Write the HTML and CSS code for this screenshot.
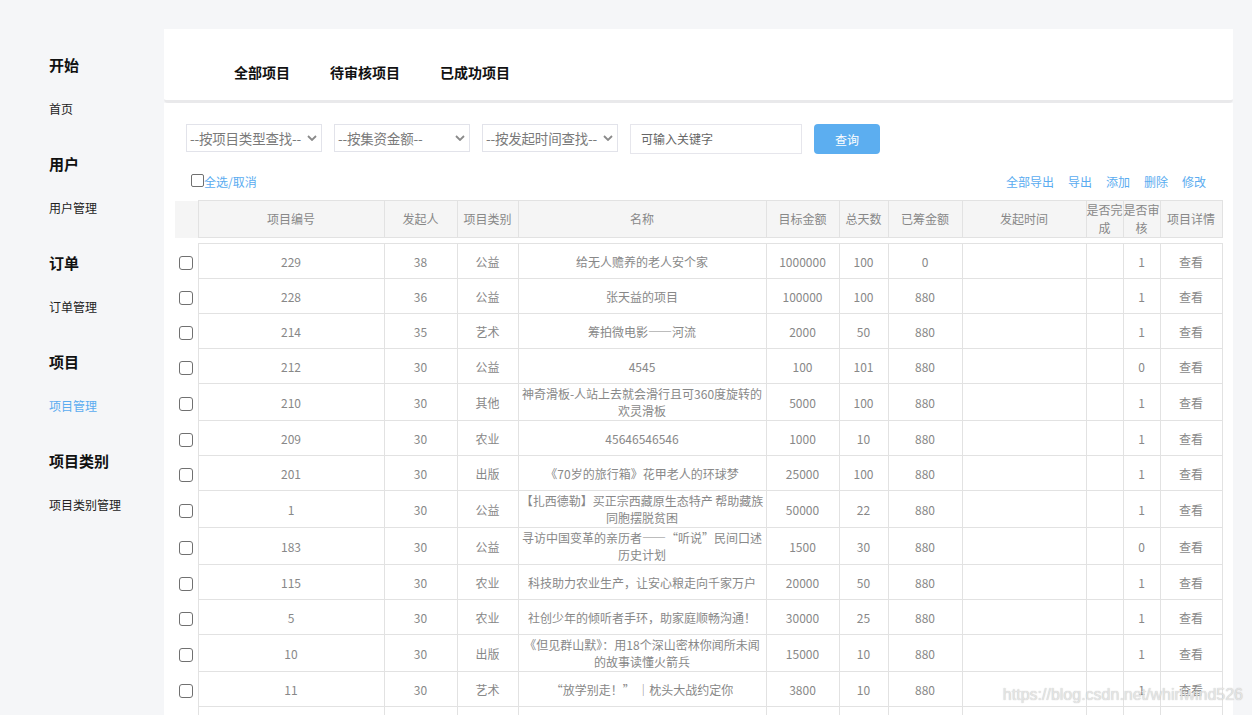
FILE: index.html
```html
<!DOCTYPE html>
<html lang="zh-CN">
<head>
<meta charset="utf-8">
<title>项目管理</title>
<link rel="stylesheet" href="styles.css">
</head>
<body>
<div class="page">
  <aside class="sidebar">
    <div class="nav-group"><div class="nav-title">开始</div><a class="nav-link" href="#">首页</a></div>
    <div class="nav-group"><div class="nav-title">用户</div><a class="nav-link" href="#">用户管理</a></div>
    <div class="nav-group"><div class="nav-title">订单</div><a class="nav-link" href="#">订单管理</a></div>
    <div class="nav-group"><div class="nav-title">项目</div><a class="nav-link active" href="#">项目管理</a></div>
    <div class="nav-group"><div class="nav-title">项目类别</div><a class="nav-link" href="#">项目类别管理</a></div>
  </aside>
  <main class="main">
    <div class="tabs-panel">
      <nav class="tabs">
        <a class="tab" href="#">全部项目</a>
        <a class="tab" href="#">待审核项目</a>
        <a class="tab" href="#">已成功项目</a>
      </nav>
    </div>
    <section class="content">
      <div class="filters">
        <div class="select"><span>--按项目类型查找--</span><svg class="chev" width="10" height="6" viewBox="0 0 10 6"><path d="M1 1 L5 5 L9 1" fill="none" stroke="#8a8a8a" stroke-width="1.8"/></svg></div>
        <div class="select"><span>--按集资金额--</span><svg class="chev" width="10" height="6" viewBox="0 0 10 6"><path d="M1 1 L5 5 L9 1" fill="none" stroke="#8a8a8a" stroke-width="1.8"/></svg></div>
        <div class="select"><span>--按发起时间查找--</span><svg class="chev" width="10" height="6" viewBox="0 0 10 6"><path d="M1 1 L5 5 L9 1" fill="none" stroke="#8a8a8a" stroke-width="1.8"/></svg></div>
        <div class="search">可输入关键字</div>
        <button class="btn-query" type="button">查询</button>
      </div>
      <div class="toolbar">
        <label class="check-all"><span class="checkbox"></span><span class="link">全选/取消</span></label>
        <div class="actions">
          <a class="link" href="#">全部导出</a>
          <a class="link" href="#">导出</a>
          <a class="link" href="#">添加</a>
          <a class="link" href="#">删除</a>
          <a class="link" href="#">修改</a>
        </div>
      </div>
      <table class="grid grid-head">
        <colgroup>
          <col class="c-chk"><col class="c-id"><col class="c-user"><col class="c-type"><col class="c-name"><col class="c-goal"><col class="c-days"><col class="c-raised"><col class="c-time"><col class="c-done"><col class="c-audit"><col class="c-detail">
        </colgroup>
        <thead>
          <tr>
            <th class="chk"></th>
            <th>项目编号</th><th>发起人</th><th>项目类别</th><th>名称</th><th>目标金额</th><th>总天数</th><th>已筹金额</th><th>发起时间</th><th>是否完成</th><th>是否审核</th><th>项目详情</th>
          </tr>
        </thead>
      </table>
      <table class="grid grid-body">
        <colgroup>
          <col class="c-chk"><col class="c-id"><col class="c-user"><col class="c-type"><col class="c-name"><col class="c-goal"><col class="c-days"><col class="c-raised"><col class="c-time"><col class="c-done"><col class="c-audit"><col class="c-detail">
        </colgroup>
        <tbody>
          <tr><td class="chk"><span class="checkbox"></span></td><td>229</td><td>38</td><td>公益</td><td>给无人赡养的老人安个家</td><td>1000000</td><td>100</td><td>0</td><td></td><td></td><td>1</td><td>查看</td></tr>
          <tr><td class="chk"><span class="checkbox"></span></td><td>228</td><td>36</td><td>公益</td><td>张天益的项目</td><td>100000</td><td>100</td><td>880</td><td></td><td></td><td>1</td><td>查看</td></tr>
          <tr><td class="chk"><span class="checkbox"></span></td><td>214</td><td>35</td><td>艺术</td><td>筹拍微电影——河流</td><td>2000</td><td>50</td><td>880</td><td></td><td></td><td>1</td><td>查看</td></tr>
          <tr><td class="chk"><span class="checkbox"></span></td><td>212</td><td>30</td><td>公益</td><td>4545</td><td>100</td><td>101</td><td>880</td><td></td><td></td><td>0</td><td>查看</td></tr>
          <tr><td class="chk"><span class="checkbox"></span></td><td>210</td><td>30</td><td>其他</td><td>神奇滑板-人站上去就会滑行且可360度旋转的欢灵滑板</td><td>5000</td><td>100</td><td>880</td><td></td><td></td><td>1</td><td>查看</td></tr>
          <tr><td class="chk"><span class="checkbox"></span></td><td>209</td><td>30</td><td>农业</td><td>45646546546</td><td>1000</td><td>10</td><td>880</td><td></td><td></td><td>1</td><td>查看</td></tr>
          <tr><td class="chk"><span class="checkbox"></span></td><td>201</td><td>30</td><td>出版</td><td>《70岁的旅行箱》花甲老人的环球梦</td><td>25000</td><td>100</td><td>880</td><td></td><td></td><td>1</td><td>查看</td></tr>
          <tr><td class="chk"><span class="checkbox"></span></td><td>1</td><td>30</td><td>公益</td><td>【扎西德勒】买正宗西藏原生态特产 帮助藏族同胞摆脱贫困</td><td>50000</td><td>22</td><td>880</td><td></td><td></td><td>1</td><td>查看</td></tr>
          <tr><td class="chk"><span class="checkbox"></span></td><td>183</td><td>30</td><td>公益</td><td>寻访中国变革的亲历者——“听说”民间口述历史计划</td><td>1500</td><td>30</td><td>880</td><td></td><td></td><td>0</td><td>查看</td></tr>
          <tr><td class="chk"><span class="checkbox"></span></td><td>115</td><td>30</td><td>农业</td><td>科技助力农业生产，让安心粮走向千家万户</td><td>20000</td><td>50</td><td>880</td><td></td><td></td><td>1</td><td>查看</td></tr>
          <tr><td class="chk"><span class="checkbox"></span></td><td>5</td><td>30</td><td>农业</td><td>社创少年的倾听者手环，助家庭顺畅沟通！</td><td>30000</td><td>25</td><td>880</td><td></td><td></td><td>1</td><td>查看</td></tr>
          <tr><td class="chk"><span class="checkbox"></span></td><td>10</td><td>30</td><td>出版</td><td>《但见群山默》：用18个深山密林你闻所未闻的故事读懂火箭兵</td><td>15000</td><td>10</td><td>880</td><td></td><td></td><td>1</td><td>查看</td></tr>
          <tr><td class="chk"><span class="checkbox"></span></td><td>11</td><td>30</td><td>艺术</td><td>“放学别走！” ｜枕头大战约定你</td><td>3800</td><td>10</td><td>880</td><td></td><td></td><td>1</td><td>查看</td></tr>
          <tr class="cut"><td class="chk"></td><td></td><td></td><td></td><td></td><td></td><td></td><td></td><td></td><td></td><td></td><td></td></tr>
        </tbody>
      </table>
    </section>
  </main>
  <div class="watermark">https://blog.csdn.net/whirlwind526</div>
</div>
</body>
</html>
```

FILE: styles.css
```css
html, body {
  margin: 0;
  height: 100%;
  overflow: hidden;
  background: #f5f6f8;
  font-family: "Noto Sans CJK SC", "Noto Sans", sans-serif;
}

.page {
  display: flex;
  height: 100vh;
  overflow: hidden;
  position: relative;
}

/* Sidebar */
.sidebar {
  width: 164px;
  flex: none;
  box-sizing: border-box;
  padding: 55px 0 0 49px;
}
.nav-title {
  font-size: 15px;
  font-weight: bold;
  line-height: 20px;
  color: #111;
}
.nav-link {
  display: block;
  margin: 24px 0 35px;
  font-size: 12px;
  line-height: 20px;
  color: #222;
  text-decoration: none;
}
.nav-link.active {
  color: #5aacf0;
}

/* Main */
.main {
  flex: 1;
  min-width: 0;
  margin: 29px 19px 0 0;
  display: flex;
  flex-direction: column;
}
.tabs-panel {
  flex: none;
  background: #fff;
  height: 38px;
  padding: 33px 0 0 70px;
  border-bottom: 3px solid #e9e9eb;
  border-radius: 0 0 4px 4px;
}
.tabs {
  display: flex;
  gap: 40px;
}
.tab {
  font-size: 14px;
  font-weight: bold;
  line-height: 20px;
  color: #111;
  text-decoration: none;
}

.content {
  flex: 1;
  background: #fff;
  padding: 21px 11px 0;
}

/* Filters */
.filters {
  display: flex;
  align-items: flex-start;
  gap: 12px;
  margin-left: 11px;
}
.select {
  width: 136px;
  height: 28px;
  box-sizing: border-box;
  border: 1px solid #e2e3ea;
  display: flex;
  align-items: center;
  justify-content: space-between;
  padding: 0 4px 0 3px;
  font-size: 13.5px;
  letter-spacing: -0.2px;
  color: #7a7a7a;
  white-space: nowrap;
}
.chev {
  flex: none;
}
.search {
  width: 172px;
  height: 30px;
  box-sizing: border-box;
  border: 1px solid #e6e6ec;
  padding-left: 10px;
  font-size: 12px;
  line-height: 28px;
  color: #666;
}
.btn-query {
  width: 66px;
  height: 30px;
  border: none;
  border-radius: 4px;
  padding: 0;
  background: #5caef0;
  color: #fff;
  font-family: inherit;
  font-size: 12px;
}

/* Toolbar */
.toolbar {
  display: flex;
  justify-content: space-between;
  align-items: center;
  height: 16px;
  margin: 20px 16px 0;
  font-size: 12px;
  line-height: 16px;
}
.check-all {
  display: flex;
  align-items: center;
}
.checkbox {
  display: inline-block;
  width: 13px;
  height: 13px;
  box-sizing: border-box;
  border: 1px solid #707070;
  border-radius: 2px;
  background: #fff;
  vertical-align: middle;
}
.check-all .checkbox {
  margin-top: -3px;
}
.link {
  color: #5aacf0;
  text-decoration: none;
}
.actions {
  display: flex;
  gap: 14px;
}

/* Tables */
.grid {
  width: 1047px;
  table-layout: fixed;
  border-collapse: collapse;
  font-size: 12px;
  color: #888;
  text-align: center;
}
.c-chk { width: 23px; }
.c-id { width: 186px; }
.c-user { width: 73px; }
.c-type { width: 61px; }
.c-name { width: 248px; }
.c-goal { width: 73px; }
.c-days { width: 49px; }
.c-raised { width: 74px; }
.c-time { width: 124px; }
.c-done { width: 37px; }
.c-audit { width: 37px; }
.c-detail { width: 62px; }

.grid-head {
  margin-top: 10px;
}
.grid-head th {
  height: 36px;
  padding: 0;
  background: #f5f5f5;
  border: 1px solid #e2e2e2;
  font-weight: normal;
  line-height: 18px;
}
.grid-head th.chk {
  border: none;
}

.grid-body {
  margin-top: 5px;
}
.grid-body tr {
  height: 35px;
}
.grid-body td {
  padding: 1px 2px;
  border: 1px solid #e2e2e2;
  line-height: 17px;
  vertical-align: middle;
}
.grid-body td.chk {
  border: none;
  padding: 0 0 0 4px;
  text-align: left;
}
.grid-body .checkbox {
  width: 14px;
  height: 14px;
  border-radius: 3px;
}

/* Watermark */
.watermark {
  position: absolute;
  right: 9px;
  bottom: 11px;
  font-family: "Liberation Sans", Arial, sans-serif;
  font-size: 16px;
  line-height: 18px;
  color: rgba(236, 236, 236, 0.85);
  text-shadow: 0 0 1px rgba(130, 130, 130, 0.6);
  pointer-events: none;
}
```
